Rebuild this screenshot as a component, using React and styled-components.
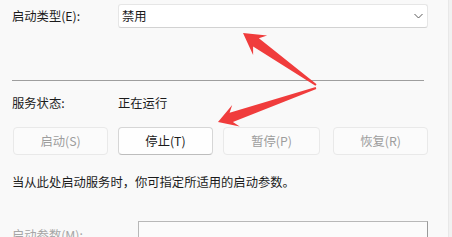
import React from 'react'
import styled, { createGlobalStyle } from 'styled-components'

const GlobalStyle = createGlobalStyle`
  html, body {
    margin: 0;
    padding: 0;
    background: #f9f9f9;
  }
  body {
    font-family: "Noto Sans CJK SC", "Noto Sans", sans-serif;
    color: #1b1b1b;
  }
`

// tapered red arrow, tail thin and head wide
const arrowPoints = (tip, tail, headLen, headHalf, neck) => {
  const dx = tip[0] - tail[0]
  const dy = tip[1] - tail[1]
  const len = Math.hypot(dx, dy)
  const ux = dx / len
  const uy = dy / len
  const nx = -uy
  const ny = ux
  const bx = tip[0] - ux * headLen
  const by = tip[1] - uy * headLen
  const kx = tip[0] - ux * (headLen - 5)
  const ky = tip[1] - uy * (headLen - 5)
  const pts = [
    tip,
    [bx + nx * headHalf, by + ny * headHalf],
    [kx + nx * neck, ky + ny * neck],
    [tail[0] + nx * 1, tail[1] + ny * 1],
    [tail[0] - nx * 1, tail[1] - ny * 1],
    [kx - nx * neck, ky - ny * neck],
    [bx - nx * headHalf, by - ny * headHalf],
  ]
  return pts.map(p => p[0].toFixed(1) + ',' + p[1].toFixed(1)).join(' ')
}

const App = () => {
  return (
    <Page>
      <GlobalStyle />
      <Row>
        <Label>启动类型(E):</Label>
        <Combo>
          <span>禁用</span>
          <svg width="9" height="6" viewBox="0 0 9 6">
            <path d="M0.5 1 L4.5 5 L8.5 1" fill="none" stroke="#5a5a5a" strokeWidth="1" />
          </svg>
        </Combo>
      </Row>

      <Divider />

      <StatusRow>
        <Label>服务状态:</Label>
        <Value>正在运行</Value>
      </StatusRow>

      <Buttons>
        <Button disabled>启动(S)</Button>
        <Button>停止(T)</Button>
        <Button disabled $wide>暂停(P)</Button>
        <Button disabled $pushed>恢复(R)</Button>
      </Buttons>

      <Hint>当从此处启动服务时，你可指定所适用的启动参数。</Hint>

      <ParamRow>
        <Label $muted $drop>启动参数(M):</Label>
        <ParamInput />
      </ParamRow>

      <EdgeStrip />

      <Arrows width="452" height="237" viewBox="0 0 452 237">
        <polygon points={arrowPoints([243, 33], [316, 85], 21, 12, 5)} fill="#f03c3c" />
        <polygon points={arrowPoints([218, 122], [316, 88], 19, 11.5, 5)} fill="#f03c3c" />
      </Arrows>
    </Page>
  )
}

export default App

const Page = styled.div`
  position: relative;
  width: 452px;
  height: 237px;
  overflow: hidden;
  background: #f9f9f9;
  padding-left: 12px;
  box-sizing: border-box;
  font-size: 12.3px;
`

const Row = styled.div`
  display: flex;
  align-items: center;
  height: 24px;
  padding-top: 4px;
`

const Label = styled.div`
  width: 106px;
  flex-shrink: 0;
  line-height: 16px;
  padding-top: ${p => (p.$drop ? '6px' : '0')};
  color: ${p => (p.$muted ? '#a6a6a6' : '#1b1b1b')};
`

const Combo = styled.div`
  width: 310px;
  height: 24px;
  box-sizing: border-box;
  background: #fff;
  border: 1px solid #e6e6e6;
  border-bottom-color: #d2d2d2;
  border-radius: 3px;
  display: flex;
  align-items: center;
  justify-content: space-between;
  padding: 0 4px 0 3px;
  line-height: 16px;
`

const Divider = styled.div`
  width: 412px;
  height: 1px;
  background: #9e9e9e;
  margin-top: 52px;
`

const StatusRow = styled.div`
  display: flex;
  align-items: center;
  height: 16px;
  margin-top: 14px;
`

const Value = styled.div`
  line-height: 16px;
`

const Buttons = styled.div`
  display: flex;
  gap: 10px;
  margin-top: 16px;
  padding-left: 1px;
`

const Button = styled.button`
  width: ${p => (p.$wide ? '97px' : '95px')};
  margin-left: ${p => (p.$pushed ? '3px' : '0')};
  height: 28px;
  box-sizing: border-box;
  border-radius: 4px;
  font-family: inherit;
  font-size: 12.3px;
  padding: 0;
  background: ${p => (p.disabled ? '#fbfbfb' : '#fefefe')};
  color: ${p => (p.disabled ? '#9d9d9d' : '#1b1b1b')};
  border: 1px solid ${p => (p.disabled ? '#e9e9e9' : '#d6d6d6')};
  border-bottom-color: ${p => (p.disabled ? '#e9e9e9' : '#bdbdbd')};
`

const Hint = styled.div`
  line-height: 16px;
  margin-top: 19px;
`

const ParamRow = styled.div`
  display: flex;
  align-items: flex-start;
  margin-top: 31px;
`

const ParamInput = styled.div`
  margin-left: 20px;
  width: 290px;
  height: 30px;
  box-sizing: border-box;
  border: 1px solid #b8b8b8;
  border-right-color: #9a9a9a;
  background: #fbfbfb;
  flex-shrink: 0;
`

const EdgeStrip = styled.div`
  position: absolute;
  top: 0;
  right: 0;
  width: 3px;
  height: 100%;
  background: #f1f1f1;
  border-left: 1px solid #e8e8e8;
`

const Arrows = styled.svg`
  position: absolute;
  top: 0;
  left: 0;
  pointer-events: none;
`
